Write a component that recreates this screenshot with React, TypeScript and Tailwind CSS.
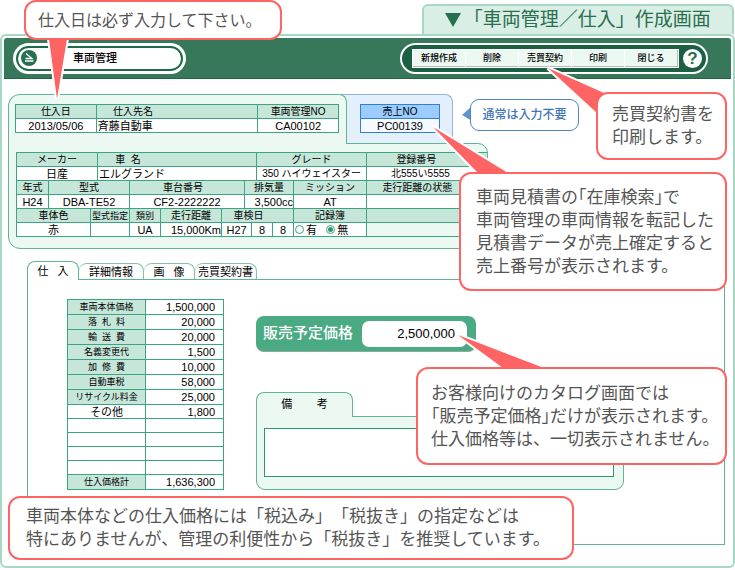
import React from 'react';
import clsx from 'clsx';

const menu = ['新規作成', '削除', '売買契約', '印刷', '閉じる'];

const carCols = [32, 42, 7, 32, 31, 61, 23, 7, 5, 16, 21, 73, 121];

const costs = [
  ['車両本体価格', '1,500,000'],
  ['落  札  料', '20,000'],
  ['輸  送  費', '20,000'],
  ['名義変更代', '1,500'],
  ['加  修  費', '10,000'],
  ['自動車税', '58,000'],
  ['リサイクル料金', '25,000'],
];

const extraCosts = [
  ['その他', '1,800'],
  ['', ''],
  ['', ''],
  ['', ''],
  ['', ''],
];

const Th = ({ children, span = 1, className = '' }: { children?: React.ReactNode; span?: number; className?: string }) => (
  <th colSpan={span} className={clsx('border border-[#3aa57f] bg-[#c5e6d9] p-0 font-normal', className)}>
    {children}
  </th>
);

const Td = ({ children, span = 1, className = '' }: { children?: React.ReactNode; span?: number; className?: string }) => (
  <td colSpan={span} className={clsx('border border-[#3aa57f] p-0', className || 'bg-white text-center')}>
    {children}
  </td>
);

const Callout = ({ className, points, children }: { className: string; points?: string; children: React.ReactNode }) => (
  <div className={clsx('absolute z-20 text-[17px] leading-[23px] text-[#555]', className)}>
    {points && (
      <svg className="absolute top-0 left-0 size-px overflow-visible" aria-hidden="true">
        <polygon points={points} fill="#ff6464" stroke="#fff" strokeWidth="4" paintOrder="stroke" />
      </svg>
    )}
    <div className="relative flex h-full flex-col justify-center rounded-[12px] border-2 border-[#ff6464] bg-white whitespace-nowrap">
      {children}
    </div>
  </div>
);

const Quote = ({ children }: { children: string }) => (
  <span className="[font-feature-settings:'halt']">{children}</span>
);

const Header = () => (
  <header className="flex h-[41px] items-center justify-between rounded-t-[3px] border-b border-[#1f6546] bg-[#37775a] pr-[23px] pl-[9px]">
    <div className="rounded-full bg-white p-[3px]">
      <h1 className="flex h-[25px] w-[167px] items-center rounded-full border-2 border-[#1c6a49] bg-white pl-[3px] text-[11px] font-medium">
        <svg viewBox="0 0 16 16" className="size-4" aria-hidden="true">
          <circle cx="8" cy="8" r="8" fill="#24704f" />
          <path d="M5 3.500 L11 8.500 H4.500 M4 11 H12.500" fill="none" stroke="#fff" strokeWidth="1.300" />
        </svg>
        <span className="flex-1 pr-7 text-center">車両管理</span>
      </h1>
    </div>
    <nav className="flex h-[31px] items-center gap-[4px] rounded-full border-2 border-white bg-[#1c6044] pr-[4px] pl-[10px]">
      <div className="flex rounded-[3px] bg-white p-px">
        {menu.map((name) => (
          <button
            key={name}
            type="button"
            className="h-[17px] w-[53px] border-r border-b border-[#b5bdb9] bg-[#ecf8f2] text-[9px] leading-4 font-medium outline outline-white"
          >
            {name}
          </button>
        ))}
      </div>
      <button type="button" className="size-[19px] rounded-full bg-white text-[17px] leading-[19px] font-bold text-[#24704f]">
        ?
      </button>
    </nav>
  </header>
);

const CarInfo = () => (
  <section className="mt-[15px] ml-[4px] w-full max-w-[480px] text-[11px] leading-[12px]">
    <div className="flex items-end">
      <div className="relative z-10 -mb-px h-[50px] w-[339px] rounded-t-[12px] rounded-tr-[8px] border border-b-0 border-[#5fb595] bg-[#ecf8f2] pt-[9px] pr-[7px] pl-[6px]">
        <table className="w-full table-fixed border-collapse">
          <colgroup>
            <col className="w-1/4" />
            <col className="w-1/2" />
            <col className="w-1/4" />
          </colgroup>
          <thead className="text-[10px]">
            <tr className="h-[14px]">
              <Th>仕入日</Th>
              <Th className="pr-[88px]">仕入先名</Th>
              <Th>車両管理NO</Th>
            </tr>
          </thead>
          <tbody>
            <tr className="h-[14px]">
              <Td>2013/05/06</Td>
              <Td className="bg-white pl-px text-left">斉藤自動車</Td>
              <Td>CA00102</Td>
            </tr>
          </tbody>
        </table>
      </div>
      <div className="-ml-2 h-[49px] w-[114px] rounded-tr-[8px] border border-b-0 border-[#8fb4dc] bg-[#e3f0fc] pt-[9px] pr-[12px] pl-[20px]">
        <table className="w-full table-fixed border-collapse">
          <thead className="text-[10px]">
            <tr className="h-[14px]">
              <th className="border border-[#3380c8] bg-[#9bcbff] p-0 font-normal">売上NO</th>
            </tr>
          </thead>
          <tbody>
            <tr className="h-[14px]">
              <td className="border border-[#3380c8] bg-[#f3f9ff] p-0 text-center">PC00139</td>
            </tr>
          </tbody>
        </table>
      </div>
    </div>
    <div className="overflow-hidden rounded-tr-[10px] rounded-b-[12px] border border-[#5fb595] bg-[#ecf8f2] pt-[8px] pb-[11px] pl-[7px]">
      <table className="w-full table-fixed border-collapse">
        <colgroup>
          {carCols.map((w, i) => (
            <col key={i} style={{ width: w }} />
          ))}
        </colgroup>
        <tbody>
          <tr className="h-[14px] text-[10px]">
            <Th span={3}>メーカー</Th>
            <Th span={6} className="pr-[98px] whitespace-pre">車  名</Th>
            <Th span={3}>グレード</Th>
            <Th className="border-r-0 pr-[22px]">登録番号</Th>
          </tr>
          <tr className="h-[14px]">
            <Td span={3}>日産</Td>
            <Td span={6} className="bg-white pl-px text-left">エルグランド</Td>
            <Td span={3} className="bg-white text-center text-[10px]">350 ハイウェイスター</Td>
            <Td className="border-r-0 bg-white pr-[14px] text-center text-[10px]">北555い5555</Td>
          </tr>
          <tr className="h-[14px] text-[10px]">
            <Th>年式</Th>
            <Th span={3}>型式</Th>
            <Th span={3} className="pr-[8px]">車台番号</Th>
            <Th span={4}>排気量</Th>
            <Th>ミッション</Th>
            <Th className="border-r-0 pr-[20px]">走行距離の状態</Th>
          </tr>
          <tr className="h-[14px]">
            <Td>H24</Td>
            <Td span={3}>DBA-TE52</Td>
            <Td span={3}>CF2-2222222</Td>
            <Td span={4} className="bg-white text-right">3,500cc</Td>
            <Td>AT</Td>
            <Td className="border-r-0 bg-white" />
          </tr>
          <tr className="h-[14px] text-[10px]">
            <Th span={2}>車体色</Th>
            <Th span={2} className="text-[9px] whitespace-nowrap">型式指定</Th>
            <Th className="text-[9px]">類別</Th>
            <Th>走行距離</Th>
            <Th span={5} className="pr-[18px]">車検日</Th>
            <Th>記録簿</Th>
            <Th className="border-r-0" />
          </tr>
          <tr className="h-[14px]">
            <Td span={2}>赤</Td>
            <Td span={2} />
            <Td>UA</Td>
            <Td className="bg-white text-right">15,000Km</Td>
            <Td span={2}>H27</Td>
            <Td span={2}>8</Td>
            <Td>8</Td>
            <Td>
              <div className="flex h-[12px] items-center justify-between pr-[18px] pl-px">
                <label className="flex items-center gap-[2px]">
                  <input type="radio" name="book" className="size-[9px] appearance-none rounded-full border border-[#3aa57f] bg-white" />有
                </label>
                <label className="flex items-center gap-[2px]">
                  <input
                    type="radio"
                    name="book"
                    defaultChecked
                    className="size-[9px] appearance-none rounded-full border border-[#3aa57f] bg-[#35946e] bg-clip-content p-px"
                  />
                  無
                </label>
              </div>
            </Td>
            <Td className="border-r-0 bg-[#ecf8f2]" />
          </tr>
        </tbody>
      </table>
    </div>
  </section>
);

const CostTable = () => (
  <table className="w-[157px] table-fixed border-collapse text-[11px] leading-[12px]">
    <tbody>
      {costs.map(([name, value]) => (
        <tr key={name} className="h-[15px]">
          <Th className="border-[#2b9770] text-[9px] whitespace-pre">{name}</Th>
          <Td className="border-[#2b9770] bg-white pr-[8px] text-right">{value}</Td>
        </tr>
      ))}
      {extraCosts.map(([name, value], i) => (
        <tr key={i} className="h-[14px]">
          <Td className="border-[#2b9770] bg-white text-center">{name}</Td>
          <Td className="border-[#2b9770] bg-white pr-[8px] text-right">{value}</Td>
        </tr>
      ))}
      <tr className="h-[15px]">
        <Th className="border-[#2b9770] text-[9px]">仕入価格計</Th>
        <Td className="border-[#2b9770] bg-white pr-[8px] text-right">1,636,300</Td>
      </tr>
    </tbody>
  </table>
);

const tab = 'h-[16px] rounded-t-[8px] border border-l-0 border-[#7cc5a8] text-[11px] leading-[14px] whitespace-pre';

const Detail = () => (
  <section className="mt-[12px] mr-[6px] ml-[23px]">
    <div className="flex items-end">
      <button
        type="button"
        className="relative z-10 -mb-px h-[19px] w-[52px] rounded-t-[8px] border border-b-0 border-[#5fb595] bg-white text-[11px] leading-[16px] whitespace-pre"
      >
        仕   入
      </button>
      <button type="button" className={clsx(tab, 'w-[65px] border-b-0')}>詳細情報</button>
      <button type="button" className={clsx(tab, 'w-[51px] border-b-0')}>画   像</button>
      <button type="button" className={clsx(tab, 'w-[62px] border-b-0')}>売買契約書</button>
    </div>
    <div className="flex gap-[32px] border border-[#5fb595] pt-[19px] pb-[54px] pl-[39px]">
      <CostTable />
      <div className="flex-1">
        <label className="mt-[17px] flex h-[36px] w-[220px] items-center justify-between rounded-[8px] border-b border-[#8fa79c] bg-[#4aaa84] pr-[9px] pl-[7px] text-[15px] font-medium text-white">
          販売予定価格
          <input
            type="text"
            defaultValue="2,500,000"
            className="h-[26px] w-[105px] rounded-[7px] bg-white pr-[12px] text-right text-[13px] font-normal text-black"
          />
        </label>
        <div className="mt-[40px] w-full max-w-[368px]">
          <label
            htmlFor="remarks"
            className="relative z-10 -mb-px block h-[25px] w-[97px] rounded-t-[8px] border border-b-0 border-[#5fb595] bg-[#ecf8f2] text-center text-[11px] leading-[22px] whitespace-pre"
          >
            備        考
          </label>
          <div className="rounded-tr-[9px] rounded-b-[9px] border border-[#5fb595] bg-[#ecf8f2] pt-[11px] pr-[9px] pb-[12px] pl-[7px]">
            <textarea id="remarks" className="block h-[49px] w-full resize-none border border-[#2b9770] bg-white" />
          </div>
        </div>
      </div>
    </div>
  </section>
);

export default function App() {
  return (
    <main className="relative bg-white pt-[4px] font-['Liberation_Sans','Noto_Sans_CJK_JP',sans-serif] text-black" lang="ja">
      <div className="mr-px ml-auto flex h-[30px] w-[312px] items-center justify-center gap-[12px] rounded-t-[6px] border-2 border-b-0 border-[#a6d8c4] bg-[#d9eee4] text-[19px] whitespace-nowrap text-[#2b6f51]">
        <svg viewBox="0 0 16 14" className="h-[14px] w-[16px]" aria-hidden="true">
          <path d="M0 0 H16 L8 14 Z" fill="#24704f" />
        </svg>
        <h2 className="[text-spacing-trim:space-all]">
          <Quote>「</Quote>車両管理／仕入」作成画面
        </h2>
      </div>
      <div className="rounded-[6px] border-2 border-[#a6d8c4] p-[2px] pb-[21px]">
        <Header />
        <CarInfo />
        <Detail />
      </div>

      <Callout className="top-0 left-[24px] h-[40px] w-[258px]" points="25,39 43,39 33,99">
        <p className="pl-[12px] text-[16px]">仕入日は必ず入力して下さい。</p>
      </Callout>
      <Callout className="top-[92px] right-[8px] h-[68px] w-[131px]" points="-48,-24 8,1 1,21">
        <p className="pl-[14px]">
          売買契約書を
          <br />
          印刷します。
        </p>
      </Callout>
      <Callout className="top-[172px] left-[459px] h-[119px] w-[268px]" points="-26,-45 49,1 19,1">
        <p className="pl-[15px]">
          車両見積書の<Quote>「在庫検索」</Quote>で
          <br />
          車両管理の車両情報を転記した
          <br />
          見積書データが売上確定すると
          <br />
          売上番号が表示されます。
        </p>
      </Callout>
      <Callout className="top-[367px] left-[416px] h-[98px] w-[311px]" points="42,-32 128,1 87,1">
        <p className="pl-[13px]">
          お客様向けのカタログ画面では
          <br />
          <Quote>「販売予定価格」</Quote>だけが表示されます。
          <br />
          仕入価格等は、一切表示されません。
        </p>
      </Callout>
      <Callout className="top-[496px] left-[8px] h-[64px] w-[566px]">
        <p className="pl-[16px] [text-spacing-trim:space-all]">
          車両本体などの仕入価格には「税込み」「税抜き」の指定などは
          <br />
          特にありませんが、管理の利便性から「税抜き」を推奨しています。
        </p>
      </Callout>
      <div className="absolute top-[99px] left-[470px] h-[32px] w-[109px]">
        <svg className="absolute top-0 left-0 size-px overflow-visible" aria-hidden="true">
          <polygon points="-8,16 2,7 2,22" fill="#5f93c9" />
        </svg>
        <p className="relative flex h-full items-center justify-center rounded-[9px] border border-[#4f86c2] bg-white text-[12px] font-medium whitespace-nowrap text-[#3f75b5]">
          通常は入力不要
        </p>
      </div>
    </main>
  );
}
